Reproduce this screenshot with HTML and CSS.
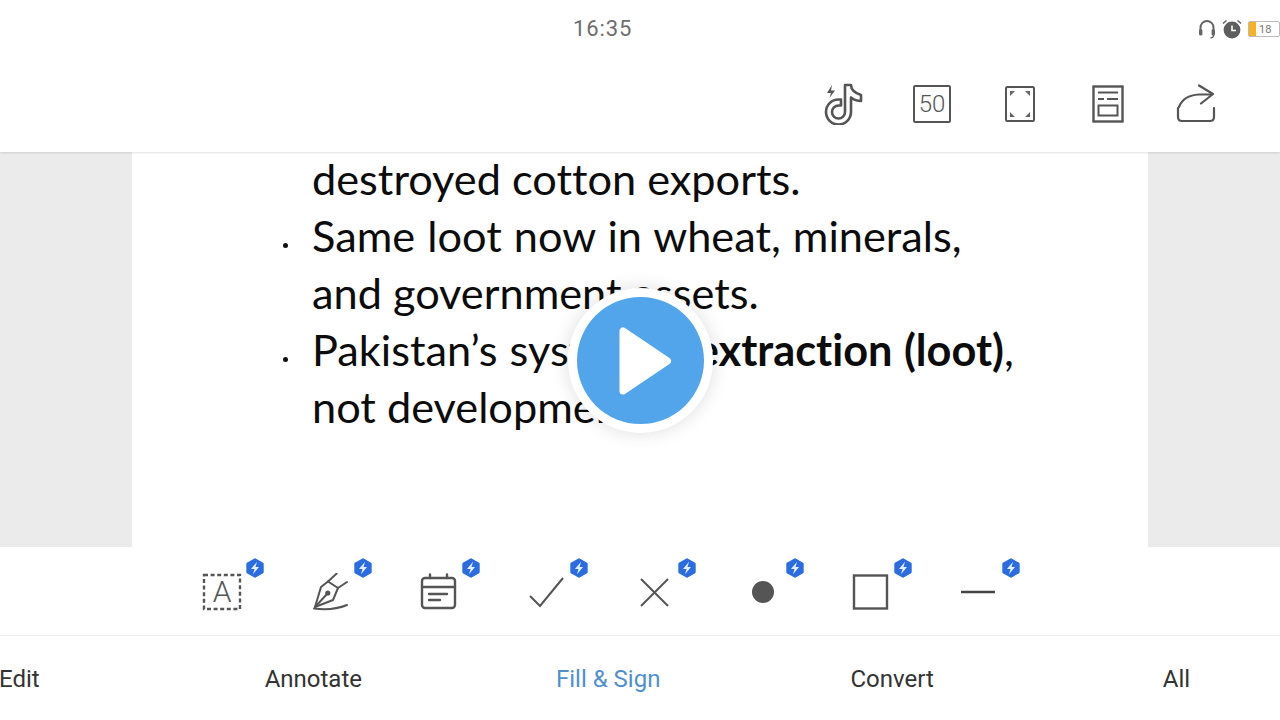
FILE: index.html
```html
<!DOCTYPE html>
<html lang="en">
<head>
    <meta charset="UTF-8">
    <title>Fill &amp; Sign</title>
    <link rel="stylesheet" href="styles.css">
</head>
<body>

<svg class="defs" width="0" height="0">
    <symbol id="boost" viewBox="0 0 20 20">
        <path d="M10 1.500 17.500 5.800V14.200L10 18.500 2.500 14.200V5.800Z" fill="#2b6de0" stroke="#2b6de0" stroke-width="2.400" stroke-linejoin="round"/>
        <path d="M12 3.800 6 11H9.500L8 16.200 14 9H10.500Z" fill="#e4eefd"/>
    </symbol>
</svg>

<div class="screen">
    <header class="top">
        <div class="status">
            <span class="time">16:35</span>
            <div class="status-icons">
                <svg width="18" height="20" viewBox="0 0 18 20" fill="none" stroke="#666" stroke-width="2">
                    <path d="M2.500 12V8.500a6.500 6.500 0 0 1 13 0V12"/>
                    <rect x="1" y="10" width="3.400" height="6.500" rx="1.500" fill="#666" stroke="none"/>
                    <rect x="13.600" y="10" width="3.400" height="6.500" rx="1.500" fill="#666" stroke="none"/>
                    <path d="M15.500 15v1.500q0 2-3 2.500" stroke-width="1.400"/>
                </svg>
                <svg width="20" height="20" viewBox="0 0 20 20">
                    <circle cx="10" cy="11" r="8.400" fill="#5e5e5e"/>
                    <path d="M1 4.500 4.500 1.500M19 4.500 15.500 1.500" stroke="#5e5e5e" stroke-width="1.500" fill="none"/>
                    <path d="M10 6.500V11.500H14" stroke="#fff" stroke-width="1.600" fill="none"/>
                </svg>
                <div class="battery"><span class="battery-fill"></span><span class="battery-num">18</span></div>
            </div>
        </div>
        <div class="actions">
            <svg width="40" height="42" viewBox="0 0 40 42" fill="none" stroke="#555" stroke-width="2.600" stroke-linejoin="round">
                <path d="M21 2H27C27 6 29.500 9.500 37 12V18C32.500 18 29.500 16.500 27 14.500V29A12.500 12.500 0 1 1 14.500 16.500H17V22.500H14.500A6.500 6.500 0 1 0 21 29Z"/>
                <path d="M8 2 3 10H7L5.500 15 11 7.500H7Z" fill="#555" stroke="none"/>
            </svg>
            <div class="box-50">50</div>
            <svg width="32" height="38" viewBox="0 0 32 38">
                <rect x="2" y="2" width="28" height="34" rx="1.500" fill="none" stroke="#555" stroke-width="2"/>
                <path d="M6 6H11L6 11ZM26 6H21L26 11ZM6 32H11L6 27ZM26 32H21L26 27Z" fill="#666"/>
            </svg>
            <svg width="32" height="38" viewBox="0 0 32 38" fill="none" stroke="#555">
                <rect x="1.500" y="1.500" width="29" height="35" stroke-width="2.400"/>
                <path d="M6 7.500H26" stroke-width="2"/>
                <path d="M6 14H12M15 14H26" stroke-width="2"/>
                <rect x="6.500" y="20.500" width="19" height="10" stroke-width="2"/>
            </svg>
            <svg width="40" height="40" viewBox="0 0 40 40" fill="none" stroke="#555" stroke-width="2.200" stroke-linecap="round" stroke-linejoin="round">
                <path d="M3 23C6 15 13 11 23 10.500H36"/>
                <path d="M23 1.500 37 10 25 19.500"/>
                <path d="M2 24V33Q2 37 6 37H34Q38 37 38 33V24"/>
            </svg>
        </div>
    </header>

    <main class="doc">
        <div class="sheet">
            <p class="line">destroyed cotton exports.</p>
            <p class="line bullet">Same loot now in wheat, minerals,</p>
            <p class="line">and government assets.</p>
            <p class="line bullet">Pakistan’s system is <b>extraction (loot)</b>,</p>
            <p class="line">not development.</p>
        </div>
    </main>

    <div class="tools">
        <div class="tool">
            <svg width="40" height="38" viewBox="0 0 40 38">
                <rect x="2" y="2" width="36" height="34" fill="none" stroke="#555" stroke-width="2.400" stroke-dasharray="4 2.600"/>
                <text x="20" y="29" text-anchor="middle" class="tool-letter">A</text>
            </svg>
            <svg class="badge"><use href="#boost"/></svg>
        </div>
        <div class="tool">
            <svg width="40" height="38" viewBox="0 0 40 38" fill="none" stroke="#555" stroke-width="2" stroke-linejoin="round" stroke-linecap="round">
                <path d="M5 34 11 14 18 8.500 28 15 23 27Z"/>
                <path d="M5 34 17.500 20.500"/>
                <circle cx="17.800" cy="20" r="1.600" fill="#555"/>
                <path d="M18 8.500 26.700 .5M28 15 37 9"/>
                <path d="M4 35.500Q22 38 37 32"/>
            </svg>
            <svg class="badge"><use href="#boost"/></svg>
        </div>
        <div class="tool">
            <svg width="40" height="38" viewBox="0 0 40 38" fill="none" stroke="#555" stroke-width="2.400" stroke-linecap="round">
                <rect x="4" y="5" width="33" height="30" rx="3"/>
                <path d="M4 14H37M12 1.500V5M29 1.500V5"/>
                <path d="M11 21H29M11 27H22"/>
            </svg>
            <svg class="badge"><use href="#boost"/></svg>
        </div>
        <div class="tool">
            <svg width="40" height="38" viewBox="0 0 40 38" fill="none" stroke="#555" stroke-width="2">
                <path d="M4 23 14 33 37 5"/>
            </svg>
            <svg class="badge"><use href="#boost"/></svg>
        </div>
        <div class="tool">
            <svg width="40" height="38" viewBox="0 0 40 38" fill="none" stroke="#555" stroke-width="2">
                <path d="M7 6 34 33M34 6 7 33"/>
            </svg>
            <svg class="badge"><use href="#boost"/></svg>
        </div>
        <div class="tool">
            <svg width="40" height="38" viewBox="0 0 40 38"><circle cx="21" cy="19" r="11" fill="#555"/></svg>
            <svg class="badge"><use href="#boost"/></svg>
        </div>
        <div class="tool">
            <svg width="40" height="38" viewBox="0 0 40 38"><rect x="4" y="2.500" width="33" height="33" fill="none" stroke="#555" stroke-width="2.400"/></svg>
            <svg class="badge"><use href="#boost"/></svg>
        </div>
        <div class="tool">
            <svg width="40" height="38" viewBox="0 0 40 38"><path d="M3 19H37" stroke="#444" stroke-width="2.400"/></svg>
            <svg class="badge"><use href="#boost"/></svg>
        </div>
    </div>

    <nav class="tabs">
        <span class="tab">Edit</span>
        <span class="tab tab-annotate">Annotate</span>
        <span class="tab tab-fill">Fill &amp; Sign</span>
        <span class="tab tab-convert">Convert</span>
        <span class="tab tab-all">All</span>
    </nav>
</div>

<div class="play">
    <svg width="54" height="72" viewBox="0 0 54 72">
        <path d="M5 6V66L49.500 36Z" fill="#fff" stroke="#fff" stroke-width="7" stroke-linejoin="round"/>
    </svg>
</div>

</body>
</html>
```

FILE: styles.css
```css
body {
    margin: 0;
    font-family: "Roboto", "Liberation Sans", sans-serif;
    background: #fff;
    color: #333;
}
.defs {
    display: block;
    height: 0;
}
.screen {
    display: flex;
    flex-direction: column;
    width: 1280px;
    height: 720px;
    overflow: hidden;
}

/* status bar + top actions */
.top {
    height: 152px;
    flex: none;
    display: flex;
    flex-direction: column;
    box-shadow: 0 1px 2px rgba(0, 0, 0, 0.12);
    position: relative;
}
.status {
    height: 58px;
    display: flex;
    align-items: center;
    justify-content: flex-end;
    position: relative;
}
.time {
    position: absolute;
    left: 573px;
    top: 15px;
    font-size: 22px;
    line-height: 28px;
    color: #6e6e6e;
    letter-spacing: 0.9px;
}
.status-icons {
    display: flex;
    align-items: center;
    gap: 6px;
}
.battery {
    width: 32px;
    height: 16px;
    border: 1px solid #bbb;
    border-radius: 2px;
    display: flex;
    align-items: center;
    font-size: 11px;
    color: #777;
    box-sizing: border-box;
}
.battery-fill {
    width: 7px;
    height: 100%;
    background: #f5b324;
    margin-right: 3px;
}
.actions {
    display: grid;
    grid-template-columns: repeat(5, 88px);
    justify-content: end;
    justify-items: center;
    align-items: center;
    height: 92px;
    padding-right: 40px;
}
.box-50 {
    width: 38px;
    height: 38px;
    box-sizing: border-box;
    border: 2px solid #555;
    border-radius: 2px;
    font-size: 24px;
    font-weight: 300;
    line-height: 34px;
    text-align: center;
    color: #555;
}

/* document page */
.doc {
    height: 395px;
    flex: none;
    background: #ebebeb;
    padding: 0 132px;
}
.sheet {
    height: 100%;
    background: #fff;
    box-sizing: border-box;
    padding: 0 0 0 180px;
    font-family: "Lato", "Liberation Sans", sans-serif;
    font-size: 43.300px;
    font-variant-ligatures: none;
    line-height: 57px;
    color: #0c0c0c;
}
.line {
    margin: 0;
    position: relative;
    top: -2px;
    white-space: nowrap;
}
.bullet {
    word-spacing: 1px;
}
.bullet::before {
    content: "";
    position: absolute;
    left: -29px;
    top: 36px;
    width: 5px;
    height: 5px;
    border-radius: 50%;
    background: #111;
}

/* tool row */
.tools {
    height: 89px;
    flex: none;
    display: flex;
    align-items: center;
    box-sizing: border-box;
    padding: 0 0 0 202px;
    border-bottom: 1px solid #eee;
    background: #fff;
}
.tool {
    width: 108px;
    flex: none;
    position: relative;
    display: flex;
    padding-top: 2px;
}
.tool-letter {
    font-family: "Roboto", sans-serif;
    font-size: 30px;
    font-weight: 300;
    fill: #555;
}
.badge {
    position: absolute;
    left: 43px;
    top: -13px;
    width: 20px;
    height: 20px;
}

/* bottom tabs */
.tabs {
    flex: 1;
    display: flex;
    align-items: center;
    font-size: 24px;
    color: #333;
    margin-left: -1px;
    padding-top: 1px;
}
.tab-annotate {
    margin-left: 225px;
}
.tab-fill {
    margin-left: 194px;
    color: #4f8fd0;
}
.tab-convert {
    margin-left: 190px;
}
.tab-all {
    margin-left: 229px;
}

/* video play button over the page */
.play {
    position: absolute;
    left: 577px;
    top: 297px;
    width: 127px;
    height: 127px;
    box-sizing: border-box;
    border-radius: 50%;
    background: #52a5ea;
    box-shadow: 0 0 0 9px #fff, 0 0 18px 10px rgba(0, 0, 0, 0.12);
    display: flex;
    align-items: center;
    justify-content: center;
    padding-left: 9px;
}
```
